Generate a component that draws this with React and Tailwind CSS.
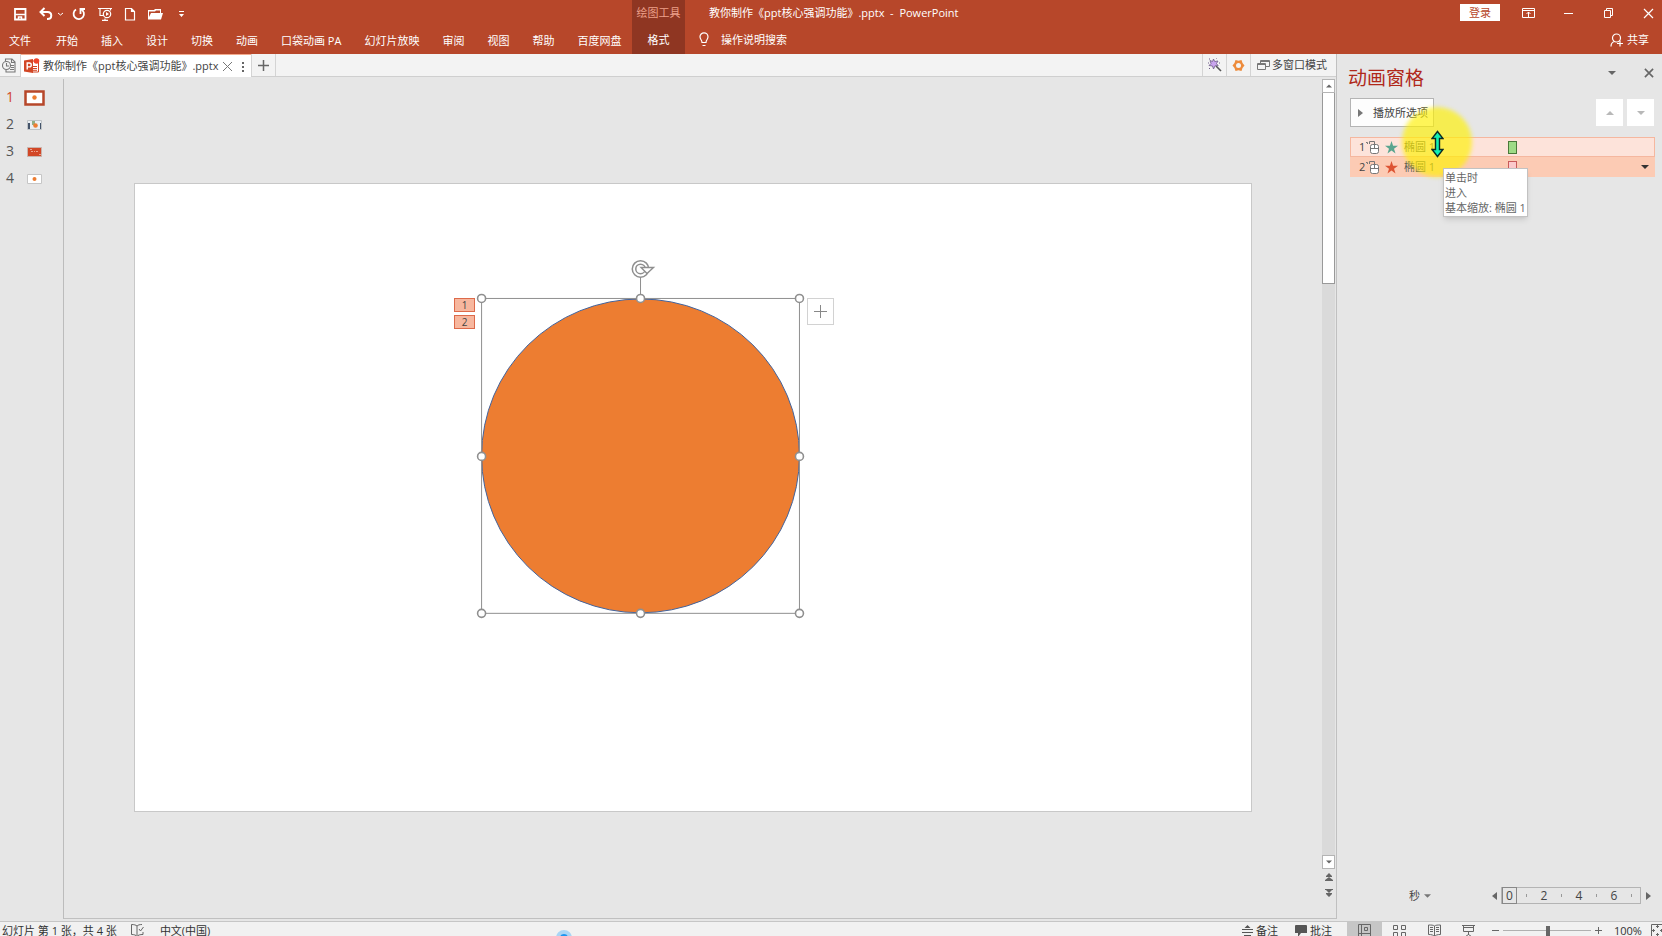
import React, { useState } from "react";

const menuTabs = ["开始", "插入", "设计", "切换", "动画", "口袋动画 PA", "幻灯片放映", "审阅", "视图", "帮助", "百度网盘"];

const timelineMarks = ["2", "4", "6"];

const handles = [
  [346, 114], [505, 114], [664, 114],
  [346, 272], [664, 272],
  [346, 429], [505, 429], [664, 429],
];

// small filled triangle used by all the drop-downs and scroll arrows
function Arrow({ dir = "down", className = "" }) {
  const paths = {
    down: "M0 2h8L4 6z",
    up: "M0 6h8L4 2z",
    left: "M6 0v8L1 4z",
    right: "M2 0v8l5-4z",
  };
  return (
    <svg className={`shrink-0 ${className}`} width="8" height="8" viewBox="0 0 8 8" fill="currentColor">
      <path d={paths[dir]} />
    </svg>
  );
}

function QuickAccess() {
  return (
    <div className="flex h-[27px] items-center pl-[13px]">
      <button type="button" aria-label="保存" className="mr-3">
        <svg width="14" height="14" viewBox="0 0 14 14" fill="none" stroke="currentColor" strokeWidth="1.800">
          <path d="M2 2h10.500v10.500H2z" />
          <path d="M2 7.500h10" strokeWidth="1.500" />
          <path d="M5.500 13v-3h3v3" strokeWidth="1.500" />
        </svg>
      </button>
      <button type="button" aria-label="撤消">
        <svg width="14" height="14" viewBox="0 0 14 14" fill="none" stroke="currentColor" strokeWidth="2">
          <path d="M2 5h6.500c5 0 5 7 0 7H8" />
          <path d="M5.500 1L1.500 5l4 4" />
        </svg>
      </button>
      <button type="button" aria-label="撤消列表" className="ml-1 mr-2">
        <svg width="7" height="8" viewBox="0 0 7 8" fill="none" stroke="currentColor">
          <path d="M1 3l2.500 2L6 3" />
        </svg>
      </button>
      <button type="button" aria-label="重复" className="mr-3">
        <svg width="14" height="14" viewBox="0 0 14 14" fill="none" stroke="currentColor" strokeWidth="1.800">
          <path d="M4 2.500A5.200 5.200 0 1 0 9 2.200" />
          <path d="M13 2H8.500v5" />
        </svg>
      </button>
      <button type="button" aria-label="从头开始" className="mr-3">
        <svg width="14" height="14" viewBox="0 0 14 14" fill="none" stroke="currentColor" strokeWidth="1.200">
          <path d="M0 1.500h14M2 2v6.500h3M12.500 2v1.500M4 13.300h6M7 11.500v2" />
          <circle cx="9" cy="7" r="3.700" />
          <path d="M8 5l3 2-3 2z" fill="currentColor" stroke="none" />
        </svg>
      </button>
      <button type="button" aria-label="新建" className="mr-3">
        <svg width="12" height="14" viewBox="0 0 12 14" fill="none" stroke="currentColor" strokeWidth="1.200">
          <path d="M1.500 1.500h6l3 3v8.500h-9zM7.500 1.500v3h3" />
        </svg>
      </button>
      <button type="button" aria-label="打开" className="mr-[15px]">
        <svg width="15" height="14" viewBox="0 0 15 14" fill="currentColor">
          <path d="M0 12V3h6l1-1h6v4h-1V3.500H8l-1 1H1V10l2-4h12l-2 6.500H0z" />
        </svg>
      </button>
      <button type="button" aria-label="自定义快速访问工具栏">
        <svg width="7" height="8" viewBox="0 0 7 8" fill="currentColor">
          <path d="M1 1h5v1H1zM1 4h5L3.500 7z" />
        </svg>
      </button>
    </div>
  );
}

function Header() {
  return (
    <header className="flex h-[54px] shrink-0 bg-[#b7472a] text-white">
      <div className="w-[632px] shrink-0">
        <QuickAccess />
        <nav className="flex h-7 items-center pl-[9px]">
          <button type="button" className="mr-[25px]">文件</button>
          <div className="flex gap-[23px]">
            {menuTabs.map((tab) => (
              <button type="button" key={tab} className="whitespace-nowrap">{tab}</button>
            ))}
          </div>
        </nav>
      </div>
      <div className="flex w-[53px] shrink-0 flex-col items-center bg-[#8f3622]">
        <span className="flex h-[26px] items-center whitespace-nowrap text-[#eda08a]">绘图工具</span>
        <button type="button" className="h-7">格式</button>
      </div>
      <div className="min-w-0 flex-1">
        <div className="flex h-[25px] items-center pl-6 pr-[7px]">
          <h1 className="whitespace-pre">教你制作《ppt核心强调功能》.pptx  -  PowerPoint</h1>
          <button type="button" className="ml-auto h-[17px] w-10 bg-white leading-4 text-[#b7472a]">登录</button>
          <div className="ml-[22px] flex items-center gap-[27px]">
            <button type="button" aria-label="功能区显示选项">
              <svg width="13" height="12" viewBox="0 0 13 12" fill="none" stroke="currentColor">
                <path d="M.5 1.500h12v9H.5zM.5 3.500h12M6.500 10V5M4.500 7l2-2 2 2" />
              </svg>
            </button>
            <button type="button" aria-label="最小化">
              <svg width="13" height="12" viewBox="0 0 13 12" fill="none" stroke="currentColor">
                <path d="M2 6.500h9" />
              </svg>
            </button>
            <button type="button" aria-label="还原">
              <svg width="13" height="12" viewBox="0 0 13 12" fill="none" stroke="currentColor">
                <path d="M2.500 3.500h6v7h-6zM4.500 3V1.500h6v7H9" />
              </svg>
            </button>
            <button type="button" aria-label="关闭">
              <svg width="13" height="12" viewBox="0 0 13 12" fill="none" stroke="currentColor" strokeWidth="1.200">
                <path d="M2 2l9 9M11 2l-9 9" />
              </svg>
            </button>
          </div>
        </div>
        <div className="flex h-[29px] items-center pl-[14px] pr-[13px]">
          <svg className="mr-3" width="10" height="15" viewBox="0 0 10 15" fill="none" stroke="currentColor" strokeWidth="1.200">
            <path d="M3 10.500C3 8 1 7.500 1 4.800a4 4 0 0 1 8 0C9 7.500 7 8 7 10.500zM3.500 13.500h3" />
          </svg>
          <button type="button">操作说明搜索</button>
          <button type="button" className="ml-auto flex items-center gap-1">
            <svg width="13" height="14" viewBox="0 0 13 14" fill="none" stroke="currentColor" strokeWidth="1.200">
              <circle cx="6.500" cy="5" r="4" />
              <path d="M1 13.500c0-3 1.500-4.500 3.500-5M10 7.500v6M7 10.500h6" />
            </svg>
            共享
          </button>
        </div>
      </div>
    </header>
  );
}

function DocumentTabs() {
  return (
    <div className="flex h-[23px] shrink-0 border-b border-[#cfcfcf] bg-[#f3f3f3] text-[#444]">
      <button type="button" aria-label="历史文档" className="w-[21px] border-r border-[#d4d4d4] pl-[2px]">
        <svg width="14" height="15" viewBox="0 0 14 15" fill="none" stroke="#777" strokeWidth="1.100">
          <path d="M3.500 3V1h6.500l3 3v10H4v-2M9.500 1v3.500H13M9 7.500h3M9 9.500h3M8 11.500h4" />
          <circle cx="4.500" cy="7.500" r="4" />
          <path d="M4.500 5v3h2.500" />
        </svg>
      </button>
      <div className="flex h-[23px] w-[230px] items-center border-t border-[#f3a98c] bg-white pl-[3px]">
        <svg className="mr-[3px] shrink-0" width="16" height="16" viewBox="0 0 16 16">
          <path d="M8 3h6.500v11H8z" fill="#fff" stroke="#d24726" />
          <path d="M9 8.500h4M9 10.500h4M9 12.300h4" stroke="#d24726" />
          <circle cx="12.500" cy="3" r="2.800" fill="#f0452a" />
          <path d="M0 2.500L9 1v14L0 13.500z" fill="#d24726" />
          <path d="M3.200 11.500V5H5.300a1.900 1.900 0 0 1 0 3.900H3.200" fill="none" stroke="#fff" strokeWidth="1.400" />
        </svg>
        <span className="whitespace-nowrap">教你制作《ppt核心强调功能》.pptx</span>
        <button type="button" aria-label="关闭标签" className="ml-auto mr-2">
          <svg width="11" height="11" viewBox="0 0 11 11" fill="none" stroke="#777">
            <path d="M1 1l9 9M10 1l-9 9" />
          </svg>
        </button>
        <button type="button" aria-label="标签菜单" className="mr-[6px]">
          <svg width="4" height="11" viewBox="0 0 4 11" fill="#666">
            <path d="M1 1h2v2H1zM1 5h2v2H1zM1 9h2v2H1z" />
          </svg>
        </button>
      </div>
      <button type="button" aria-label="新建标签" className="flex w-[25px] items-center justify-center border-x border-[#d4d4d4]">
        <svg width="11" height="11" viewBox="0 0 11 11" stroke="#666" strokeWidth="1.500">
          <path d="M5.500 0v11M0 5.500h11" />
        </svg>
      </button>
      <button type="button" aria-label="魔法棒" className="ml-auto flex w-6 items-center justify-center border-l border-[#d4d4d4]">
        <svg width="14" height="14" viewBox="0 0 14 14">
          <path d="M8 8l5 5" stroke="#555" strokeWidth="1.600" />
          <path d="M5.500 1l1.200 2.500L10 3 8.500 5.500l1.700 2.300-3-.2L5.500 11 4.500 8 1 7.500 3 5.500 2 2.500l2.500 1z" fill="#c9a4ee" stroke="#6d5a86" strokeWidth=".8" />
          <path d="M0 5h1M1 1h1M8 0h1M1 10.500h1M11 5h1" stroke="#6d5a86" />
        </svg>
      </button>
      <button type="button" aria-label="设置" className="flex w-6 items-center justify-center border-l border-[#d4d4d4]">
        <svg width="13" height="13" viewBox="0 0 13 13">
          <path d="M3.500 1L6.500 1.800 9.500 1 10.500 4l2 2.500-2 2.500-1 3-3-.8-3 .8-1-3-2-2.500 2-2.500z" fill="#ed8b3b" />
          <circle cx="6.500" cy="6.500" r="2.500" fill="#f3f3f3" />
        </svg>
      </button>
      <button type="button" className="flex w-[86px] items-center gap-[2px] whitespace-nowrap border-l border-[#d4d4d4] pl-[6px]">
        <svg className="shrink-0" width="13" height="12" viewBox="0 0 13 12" fill="none" stroke="#777">
          <path d="M.5 4.500h8v6h-8zM.5 5.500h8M3.500 4V1.500h9v6H9M3.500 2.500h9" />
        </svg>
        多窗口模式
      </button>
    </div>
  );
}

function SlideThumbs() {
  return (
    <ol className="mt-[2px] w-16 shrink-0 border-r border-[#bcbcbc] pt-1 text-sm text-[#555]">
      <li className="flex h-[27px] items-center gap-[10px] pl-[6px] text-[#d24726]">
        1
        <svg className="mt-[2px]" width="22" height="16" viewBox="0 0 22 16">
          <path d="M1.500 1.500h18v13h-18z" fill="#fff" stroke="#b7472a" strokeWidth="2.500" />
          <circle cx="10.500" cy="7.500" r="2.200" fill="#ed7d31" />
        </svg>
      </li>
      <li className="flex h-[27px] items-center gap-[10px] pl-[6px]">
        2
        <svg className="mt-[2px]" width="22" height="16" viewBox="0 0 22 16">
          <path d="M3.500 3.500h14v9h-14z" fill="#e9eef2" stroke="#bfc3c6" />
          <path d="M4 6h2v6H4zM16 6h1v6h-1z" fill="#44546a" />
          <path d="M8 4h3v4H8z" fill="#8fae86" />
          <circle cx="11.500" cy="8.500" r="2.300" fill="#ed7d31" />
        </svg>
      </li>
      <li className="flex h-[27px] items-center gap-[10px] pl-[6px]">
        3
        <svg className="mt-[2px]" width="22" height="16" viewBox="0 0 22 16">
          <path d="M3.500 3.500h14v9h-14z" fill="#d24726" stroke="#c9b5ae" />
          <path d="M6 5.500h2M7 7.500h2M10 7.500h1M12 7.500h2M15 10.500h2" stroke="#f3b9a8" strokeWidth=".8" />
        </svg>
      </li>
      <li className="flex h-[27px] items-center gap-[10px] pl-[6px]">
        4
        <svg className="mt-[2px]" width="22" height="16" viewBox="0 0 22 16">
          <path d="M3.500 3.500h14v9h-14z" fill="#fff" stroke="#c6c6c6" />
          <circle cx="10.500" cy="8" r="2" fill="#ed7d31" />
        </svg>
      </li>
    </ol>
  );
}

function Slide() {
  return (
    <div className="relative aspect-video w-full outline outline-[#c8c8c8] bg-white">
      <svg className="block h-full w-full" viewBox="0 0 1116 628" fill="none">
        <ellipse cx="505.500" cy="272" rx="159" ry="157" fill="#ed7d31" stroke="#41629c" />
        <g stroke="#8f8f8f">
          <path d="M346.500 114.500h318v315h-318zM505.500 114V92" />
          {handles.map(([x, y]) => (
            <circle key={`${x}-${y}`} cx={x + 0.5} cy={y + 0.5} r="4" fill="#fff" strokeWidth="1.600" />
          ))}
        </g>
        {/* rotate grip */}
        <circle cx="505.500" cy="85" r="6.500" stroke="#8f8f8f" strokeWidth="5" />
        <circle cx="505.500" cy="85" r="6.500" stroke="#fff" strokeWidth="2" />
        <path d="M506 83.500h12.500l-6.500 6z" fill="#fff" stroke="#8f8f8f" strokeWidth="1.400" />
      </svg>
      <div className="absolute left-[319px] top-[114px] flex flex-col gap-[3px] text-[10px] leading-3 text-[#444]">
        <span className="h-[14px] w-[21px] border border-[#dd6a4a] bg-[#f7b79e] text-center">1</span>
        <span className="h-[14px] w-[21px] border border-[#dd6a4a] bg-[#f7b79e] text-center">2</span>
      </div>
      <button type="button" aria-label="布局选项" className="absolute left-[672px] top-[114px] flex size-[27px] items-center justify-center border border-[#d2d2d2] bg-white">
        <svg width="13" height="13" viewBox="0 0 13 13" stroke="#888">
          <path d="M6.500 0v13M0 6.500h13" />
        </svg>
      </button>
    </div>
  );
}

function ScrollColumn() {
  return (
    <div className="mt-[2px] flex w-[14px] shrink-0 flex-col items-center pb-[21px] pr-px text-[#666]">
      <button type="button" aria-label="向上滚动" className="flex h-[14px] w-[13px] shrink-0 items-center justify-center border border-[#b4b4b4] bg-white">
        <Arrow dir="up" className="w-[6px]" />
      </button>
      <div className="w-[13px] flex-1 bg-[#dadada]">
        <div className="h-[191px] border border-t-0 border-[#999] bg-white" />
      </div>
      <button type="button" aria-label="向下滚动" className="flex h-[14px] w-[13px] shrink-0 items-center justify-center border border-[#b4b4b4] bg-white">
        <Arrow className="w-[6px]" />
      </button>
      <button type="button" aria-label="上一张幻灯片" className="mt-1">
        <svg className="block" width="8" height="8" viewBox="0 0 8 8" fill="currentColor">
          <path d="M4 0l3 3H1zM4 4l4 3H0zM1 3h6v1H1zM0 7h8v1H0z" />
        </svg>
      </button>
      <button type="button" aria-label="下一张幻灯片" className="mt-2">
        <svg className="block" width="8" height="8" viewBox="0 0 8 8" fill="currentColor">
          <path d="M0 0h8v1H0zM1 1h6L4 4zM1 4h6v1H1zM1 5h6L4 8z" />
        </svg>
      </button>
    </div>
  );
}

function EffectRow({ index, starColor, selected, children }) {
  return (
    <li className={`flex h-5 items-center pl-2 pr-[5px] ${selected ? "border border-[#f5b79f] bg-[#fde3da]" : "border border-[#fccbb4] bg-[#fccbb4]"}`}>
      <span className="w-[7px]">{index}</span>
      <svg className="shrink-0" width="14" height="15" viewBox="0 0 14 15" fill="none" stroke="#777">
        <path d="M0 2.500h1.500v1.500M3.500 4V1.500h5v4" />
        <rect x="4.500" y="4.500" width="8" height="9" rx="2" fill="#fff" />
        <path d="M4.500 8.500h8M8.500 4v4.500" />
      </svg>
      <svg className="ml-[5px] shrink-0" width="13" height="13" viewBox="0 0 13 13" fill={starColor}>
        <path d="M6.500 0l1.600 4.700H13L9 7.700l1.500 4.900-4-3-4 3L4 7.700 0 4.700h4.900z" />
      </svg>
      <span className="ml-[6px] w-[104px] whitespace-pre text-[#555]">椭圆 1</span>
      {children}
    </li>
  );
}

function AnimationPane() {
  const [unit, setUnit] = useState("秒");

  return (
    <aside className="flex w-[325px] shrink-0 flex-col bg-[#e6e6e6] text-[#444]">
      <div className="flex h-[44px] items-center pl-[11px] pr-2 pt-[2px]">
        <h2 className="pt-[2px] text-[19px] leading-6 text-[#b0281a]">动画窗格</h2>
        <button type="button" aria-label="任务窗格选项" className="mb-2 ml-auto mr-7 text-[#666]">
          <Arrow />
        </button>
        <button type="button" aria-label="关闭窗格" className="mb-2">
          <svg width="10" height="10" viewBox="0 0 11 11" stroke="#666" strokeWidth="1.800">
            <path d="M1 1l9 9M10 1l-9 9" />
          </svg>
        </button>
      </div>
      <div className="flex items-center gap-1 pl-[13px] pr-2">
        <button type="button" className="mr-auto flex h-[29px] w-[84px] items-center gap-[9px] border border-[#b4b4b4] bg-[#fdfdfd] pl-[5px] whitespace-nowrap">
          <Arrow dir="right" className="text-[#777]" />
          播放所选项
        </button>
        <button type="button" aria-label="上移" className="flex size-[27px] items-center justify-center bg-white text-[#b8b8b8]">
          <Arrow dir="up" />
        </button>
        <button type="button" aria-label="下移" className="flex size-[27px] items-center justify-center bg-white text-[#b8b8b8]">
          <Arrow />
        </button>
      </div>

      <div className="relative ml-[13px] mr-[7px] mt-[10px]">
        <ol>
          <EffectRow index="1" starColor="#5aa58f" selected>
            <span className="h-[13px] w-[9px] border border-[#4a7a3a] bg-[#9edb86]" />
          </EffectRow>
          <EffectRow index="2" starColor="#dd5433">
            <span className="h-[13px] w-[9px] border border-[#c85a5a] bg-[#fbc9cb]" />
            <button type="button" aria-label="效果选项" className="ml-auto text-[#333]">
              <Arrow />
            </button>
          </EffectRow>
        </ol>

        {/* pointer highlight, cursor and tooltip float over the list */}
        <div className="pointer-events-none absolute left-[52px] top-[-30px] size-[70px] rounded-full bg-[#fff200]/65 blur-[2px]" />
        <svg className="absolute left-[81px] top-[-7px]" width="13" height="28" viewBox="0 0 13 28">
          <path d="M6.500 1.500L12 8.500H8.500v11H12l-5.500 7-5.500-7h3.500v-11H1z" fill="#12f0b4" stroke="#0a2a26" strokeWidth="1.400" />
        </svg>
        <div className="absolute left-[93px] top-[31px] whitespace-nowrap border border-[#c2c2c2] bg-white px-px py-px leading-[15px] text-[#666] shadow-md">
          <p>单击时</p>
          <p>进入</p>
          <p>基本缩放: 椭圆 1</p>
        </div>
      </div>

      <div className="mb-[17px] mt-auto flex h-[17px] items-center pl-[72px] pr-[10px]">
        <label className="relative flex items-center">
          <select
            aria-label="时间单位"
            value={unit}
            onChange={(e) => setUnit(e.target.value)}
            className="w-[22px] appearance-none bg-transparent"
          >
            <option>秒</option>
          </select>
          <Arrow className="pointer-events-none absolute right-0 w-[7px] text-[#777]" />
        </label>
        <button type="button" aria-label="时间轴后退" className="ml-auto mr-[2px] text-[#666]">
          <Arrow dir="left" />
        </button>
        <div className="flex h-[17px] w-[140px] items-center border border-[#b4b4b4] text-xs leading-4">
          <span className="-my-px h-[17px] w-[15px] shrink-0 border border-[#888] text-center leading-[15px]">0</span>
          {timelineMarks.map((mark) => (
            <React.Fragment key={mark}>
              <span className="ml-[9px] h-[3px] w-px bg-[#999]" />
              <span className="ml-[9px] w-4 text-center">{mark}</span>
            </React.Fragment>
          ))}
          <span className="ml-[9px] h-[3px] w-px bg-[#999]" />
        </div>
        <button type="button" aria-label="时间轴前进" className="ml-[3px] text-[#666]">
          <Arrow dir="right" />
        </button>
      </div>
    </aside>
  );
}

function StatusBar() {
  const [zoom, setZoom] = useState(51);

  return (
    <footer className="relative h-[15px] shrink-0 overflow-hidden border-t border-[#c6c6c6] bg-[#f1f1f1] leading-[14px] text-[#333]">
      <div className="flex h-[17px] items-center pl-[2px]">
        <span className="whitespace-nowrap">幻灯片 第 1 张，共 4 张</span>
        <button type="button" aria-label="拼写检查" className="ml-[14px] mr-4">
          <svg width="13" height="13" viewBox="0 0 13 13" fill="none" stroke="#666">
            <path d="M6 12.500V2C5 1 3 .5.500.5v10c2.500 0 4.500.5 5.500 2 1-1.500 3-2 6-2V8M6 2c1-1 2.500-1.500 5-1.500M8 5l1.500 2L12.500 3" />
          </svg>
        </button>
        <button type="button" className="whitespace-nowrap">中文(中国)</button>

        <button type="button" className="ml-auto mr-[17px] flex items-center gap-[3px] whitespace-nowrap">
          <svg width="11" height="11" viewBox="0 0 11 11" fill="#555">
            <path d="M5.500 0l3 3h-6zM0 4h11v1H0zM0 7h11v1H0zM2 10h7v1H2z" />
          </svg>
          备注
        </button>
        <button type="button" className="mr-[15px] flex items-center gap-[3px] whitespace-nowrap">
          <svg width="12" height="12" viewBox="0 0 12 12" fill="#555">
            <path d="M1 0h10a1 1 0 0 1 1 1v7H6l-3 4V8H0V1a1 1 0 0 1 1-1z" />
          </svg>
          批注
        </button>
        <div className="flex h-[17px]">
          <button type="button" aria-label="普通视图" className="flex w-[35px] items-center justify-center bg-[#c6c6c6]">
            <svg width="13" height="13" viewBox="0 0 13 13" fill="none" stroke="#666">
              <path d="M.5.500h12v12H.5zM3.500.500v12M.5 9.500h12M6.500 3.500h3v3h-3z" />
            </svg>
          </button>
          <button type="button" aria-label="幻灯片浏览" className="flex w-[35px] items-center justify-center">
            <svg width="13" height="12" viewBox="0 0 13 12" fill="none" stroke="#666">
              <path d="M.5.500h4v4h-4zM8.500.500h4v4h-4zM.5 7.500h4v4h-4zM8.500 7.500h4v4h-4z" />
            </svg>
          </button>
          <button type="button" aria-label="阅读视图" className="flex w-[34px] items-center justify-center">
            <svg width="13" height="13" viewBox="0 0 13 13" fill="none" stroke="#666">
              <path d="M6.500 2v10.500M.5 1c2.500 0 5 0 6 1 1-1 3.500-1 6-1v9.500c-3 0-5 .5-6 2-1-1.500-3-2-6-2zM2 3.500h3M2 5.500h3M2 7.500h3M8 3.500h3M8 5.500h3M8 7.500h3" />
            </svg>
          </button>
          <button type="button" aria-label="幻灯片放映" className="flex w-[35px] items-center justify-center">
            <svg width="13" height="13" viewBox="0 0 13 13" fill="none" stroke="#666">
              <path d="M0 1.500h13M1.500 2v5.500h10V2M6.500 7.500V11M3.500 12.500l3-2 3 2M2 3.500h9" />
            </svg>
          </button>
        </div>
        <button type="button" aria-label="缩小" className="ml-[6px]">
          <svg width="7" height="7" viewBox="0 0 7 7" stroke="#666">
            <path d="M0 3.500h7" />
          </svg>
        </button>
        <input
          type="range"
          aria-label="显示比例"
          value={zoom}
          onChange={(e) => setZoom(Number(e.target.value))}
          className="mx-1 h-3 w-[88px] appearance-none bg-[linear-gradient(#b0b0b0,#b0b0b0)] bg-[length:100%_1px] bg-center bg-no-repeat [&::-webkit-slider-thumb]:h-[10px] [&::-webkit-slider-thumb]:w-1 [&::-webkit-slider-thumb]:appearance-none [&::-webkit-slider-thumb]:bg-[#666]"
        />
        <button type="button" aria-label="放大">
          <svg width="7" height="7" viewBox="0 0 7 7" stroke="#666">
            <path d="M0 3.500h7M3.500 0v7" />
          </svg>
        </button>
        <span className="ml-3 w-[37px]">100%</span>
        <button type="button" aria-label="适应窗口" className="w-[11px] shrink-0 overflow-hidden">
          <svg width="13" height="13" viewBox="0 0 13 13" fill="none" stroke="#666">
            <path d="M.5.500h12v12H.5zM6.500 1v3M6.500 9v3M1 6.500h3M9 6.500h3M5 3l1.500-1.500L8 3M5 10l1.500 1.500L8 10M3 5L1.500 6.500 3 8M10 5l1.500 1.500L10 8" />
          </svg>
        </button>
      </div>
      <span className="absolute left-[556px] top-2 size-4 rounded-full border-4 border-[#a9d5f5] bg-[#1e96f0]" />
    </footer>
  );
}

function App() {
  return (
    <div className="flex h-screen w-full flex-col overflow-hidden bg-[#e6e6e6] font-['Open_Sans','Noto_Sans_CJK_SC',sans-serif] text-[11px] leading-4">
      <Header />
      <main className="flex min-h-0 flex-1">
        <div className="mb-[2px] flex min-w-0 flex-1 flex-col border-r border-[#c0c0c0]">
          <DocumentTabs />
          <div className="flex min-h-0 flex-1">
            <SlideThumbs />
            <div className="flex min-w-0 flex-1 border-b border-[#c0c0c0]">
              <div className="flex min-w-0 flex-1 items-center px-[71px]">
                <Slide />
              </div>
              <ScrollColumn />
            </div>
          </div>
        </div>
        <AnimationPane />
      </main>
      <StatusBar />
    </div>
  );
}

export default App;
